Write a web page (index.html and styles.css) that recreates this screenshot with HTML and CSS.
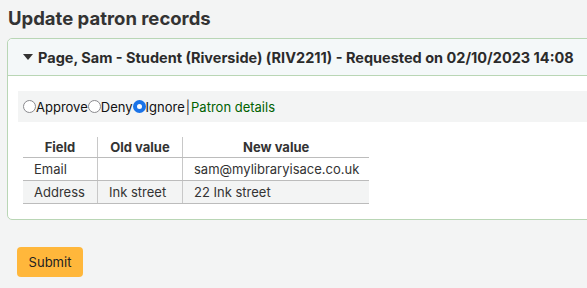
FILE: index.html
```html
<!DOCTYPE html>
<html lang="en">
<head>
<meta charset="utf-8">
<title>Update patron records</title>
<link rel="stylesheet" href="styles.css">
</head>
<body>
<main class="page">
  <h1 class="title">Update patron records</h1>
  <section class="panel">
    <header class="panel-head">
      <svg class="caret" width="10" height="6" viewBox="0 0 10 6"><path d="M0 0h10L5 6z" fill="#333"/></svg>
      <span>Page, Sam - Student (Riverside) (RIV2211) - Requested on 02/10/2023 14:08</span>
    </header>
    <div class="panel-body">
      <div class="actions">
        <label class="opt"><input type="radio" name="a" class="radio">Approve</label>
        <label class="opt"><input type="radio" name="a" class="radio">Deny</label>
        <label class="opt"><input type="radio" name="a" class="radio" checked>Ignore</label>
        <span class="sep">|</span>
        <a class="link" href="#">Patron details</a>
      </div>
      <table class="changes">
        <thead>
          <tr><th class="c1">Field</th><th class="c2">Old value</th><th class="c3">New value</th></tr>
        </thead>
        <tbody>
          <tr><td>Email</td><td></td><td>sam@mylibraryisace.co.uk</td></tr>
          <tr class="alt"><td>Address</td><td>Ink street</td><td>22 Ink street</td></tr>
        </tbody>
      </table>
    </div>
  </section>
  <button class="submit" type="button">Submit</button>
</main>
</body>
</html>
```
FILE: styles.css
```css
html, body {
  margin: 0;
  padding: 0;
  overflow: hidden;
}
body {
  background: #f3f4f4;
  font-family: "Inter", "Noto Sans", sans-serif;
  color: #333;
  width: 587px;
  height: 288px;
}
.page {
  padding: 0 0 0 7px;
}
.title {
  margin: 0;
  padding: 5px 0 0 1px;
  height: 33px;
  font-size: 18.5px;
  font-weight: 700;
  line-height: 26px;
  color: #333;
}
.panel {
  width: 640px;
  border: 1px solid #b9d6b5;
  border-radius: 5px;
  background: #fff;
  box-sizing: border-box;
}
.panel-head {
  display: flex;
  align-items: center;
  gap: 5px;
  height: 36px;
  padding-left: 15px;
  background: #f4f8f9;
  border-bottom: 1px solid #b9d6b5;
  border-radius: 5px 5px 0 0;
  font-size: 14.5px;
  font-weight: 700;
  color: #2b2b2b;
}
.panel-body {
  padding: 15px 0 15px 10px;
}
.actions {
  display: flex;
  align-items: center;
  height: 31px;
  padding-left: 5px;
  background: #f3f4f4;
  font-size: 13px;
  color: #111;
}
.opt {
  display: flex;
  align-items: center;
}
.radio {
  appearance: none;
  -webkit-appearance: none;
  margin: 0;
  width: 13px;
  height: 13px;
  border: 1.5px solid #8a8a8e;
  border-radius: 50%;
  background: #fff;
  box-sizing: border-box;
}
.radio:checked {
  border: 4px solid #1a73e8;
  background: #fff;
}
.sep {
  margin: 0 1px;
  color: #333;
}
.link {
  color: #006100;
  text-decoration: none;
}
.changes {
  margin: 15px 0 0 5px;
  border-collapse: collapse;
  font-size: 13px;
  color: #333;
}
.changes th {
  font-weight: 700;
  height: 20px;
  padding: 0 10px;
  border-bottom: 1px solid #bcbcbc;
  text-align: center;
}
.changes td {
  height: 22px;
  padding: 0 10px 0 11px;
  border-bottom: 1px solid #bcbcbc;
}
.changes th + th,
.changes td + td {
  border-left: 1px solid #c8c8c8;
}
.c1 { width: 54px; }
.c2 { width: 64px; }
.c3 { width: 166px; }
.changes .alt td {
  background: #f3f4f4;
}
.submit {
  margin: 27px 0 0 10px;
  width: 66px;
  height: 30px;
  border: 0;
  border-radius: 4px;
  background: #ffb73b;
  font-family: "Inter", "Noto Sans", sans-serif;
  font-size: 13px;
  color: #222;
}
```
